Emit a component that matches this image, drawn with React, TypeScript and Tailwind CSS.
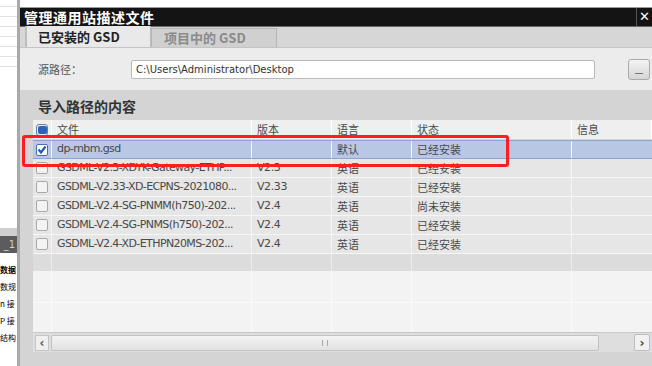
import React from "react";

const cjk = { fontFamily: '"Noto Sans CJK SC", "Noto Sans", sans-serif' };
const latin = { fontFamily: '"DejaVu Sans", "Noto Sans CJK SC", sans-serif' };

interface GsdRow {
  file: string;
  version: string;
  lang: string;
  status: string;
  checked?: boolean;
}

const rows: GsdRow[] = [
  { file: "dp-mbm.gsd", version: "", lang: "默认", status: "已经安装", checked: true },
  { file: "GSDML-V2.3-XDYK-Gateway-ETHP...", version: "V2.3", lang: "英语", status: "已经安装" },
  { file: "GSDML-V2.33-XD-ECPNS-2021080...", version: "V2.33", lang: "英语", status: "已经安装" },
  { file: "GSDML-V2.4-SG-PNMM(h750)-202...", version: "V2.4", lang: "英语", status: "尚未安装" },
  { file: "GSDML-V2.4-SG-PNMS(h750)-202...", version: "V2.4", lang: "英语", status: "已经安装" },
  { file: "GSDML-V2.4-XD-ETHPN20MS-202...", version: "V2.4", lang: "英语", status: "已经安装" },
];

// column widths: checkbox | file | version | language | status | info
const cols = ["w-[19px]", "w-[200px]", "w-[80px]", "w-[80px]", "w-[160px]", "flex-1"];

const Checkbox = ({ state }: { state: "off" | "on" | "header" }) => {
  if (state === "header") {
    return (
      <div className="w-[12px] h-[12px] rounded-[3px] border border-[#6a7fa8] bg-[#e8eef8] flex items-center justify-center">
        <div className="w-[9px] h-[8px] rounded-[2px] bg-[#2f5fb8]" />
      </div>
    );
  }
  if (state === "on") {
    return (
      <div className="w-[12px] h-[12px] rounded-[2px] border border-[#4a6fb0] bg-white flex items-center justify-center">
        <svg width="10" height="10" viewBox="0 0 10 10">
          <path d="M1.5 4.5 L4 7.5 L8.5 1.5" stroke="#1f57c3" strokeWidth="2.2" fill="none" />
        </svg>
      </div>
    );
  }
  return <div className="w-[12px] h-[12px] rounded-[2px] border border-[#a8a8a8] bg-[#f3f3f3]" />;
};

const LeftStrip = () => (
  <div className="w-[20px] shrink-0 flex flex-col bg-white border-r-[3px] border-[#a9a9a9]">
    <div className="h-[70px] flex flex-col gap-[9px] pt-[6px]">
      {[0, 1, 2, 3, 4, 5, 6].map((i) => (
        <div key={i} className="h-px bg-[#e2e2e2]" />
      ))}
    </div>
    <div className="h-[158px]" />
    <div className="h-[8px] bg-[#cfcfcf]" />
    <div className="h-[17px] bg-[#5c5c5c] text-[10px] text-[#d0d0d0] leading-[17px] text-right pr-[2px]" style={latin}>
      _1
    </div>
    <div className="flex flex-col text-[8px] text-black leading-[17px] pt-[8px] overflow-hidden" style={cjk}>
      <span className="font-bold whitespace-nowrap">数据</span>
      <span className="whitespace-nowrap">数规</span>
      <span className="whitespace-nowrap">n 接</span>
      <span className="whitespace-nowrap">P 接</span>
      <span className="whitespace-nowrap">结构</span>
    </div>
  </div>
);

const HeaderCell = ({ w, label }: { w: string; label: string }) => (
  <div className={`${w} h-full border-r border-white pl-[5px] flex items-center text-[11px] text-[#4a4a4a]`} style={cjk}>
    {label}
  </div>
);

export default function App() {
  return (
    <div className="relative w-[652px] h-[366px] flex bg-white overflow-hidden">
      <LeftStrip />

      {/* dialog */}
      <div className="flex-1 min-w-0 flex flex-col mt-[7px] border-t border-[#9a9a9a]">
        {/* title bar */}
        <div className="h-[19px] bg-[#141414] flex items-center justify-between border-b border-[#666]">
          <span className="pl-[4px] text-[14px] font-bold text-white leading-none tracking-[0.5px]" style={cjk}>
            管理通用站描述文件
          </span>
          <div className="flex items-center h-full">
            <div className="w-px h-full bg-[#555]" />
            <span className="px-[2px] text-[13px] font-bold text-white" style={latin}>
              ✕
            </span>
          </div>
        </div>

        {/* tabs */}
        <div className="h-[21px] bg-[#d6d6d6] flex items-end pl-[5px] border-b border-[#c4c4c4]">
          <div className="w-[126px] h-[21px] bg-[#e9e9e9] border-l-2 border-[#9a9a9a] border-r border-[#bdbdbd] flex items-center pl-[11px] text-[13px] font-bold text-[#222]" style={cjk}>
            已安装的 GSD
          </div>
          <div className="w-[126px] h-[19px] bg-[#d0d0d0] border border-b-0 border-[#b5b5b5] flex items-center pl-[12px] text-[13px] text-[#8a8a8a] font-bold" style={cjk}>
            项目中的 GSD
          </div>
        </div>

        {/* path */}
        <div className="h-[42px] bg-[#ececec] flex items-center pl-[18px] pr-[2px]">
          <span className="w-[93px] text-[11px] text-[#555]" style={cjk}>
            源路径：
          </span>
          <div className="w-[464px] h-[19px] bg-white border border-[#b9b9b9] rounded-[2px] flex items-center pl-[4px] text-[10px] text-[#333]" style={latin}>
            C:\Users\Administrator\Desktop
          </div>
          <div className="flex-1" />
          <div className="w-[22px] h-[21px] rounded-[3px] border border-[#a9a9a9] bg-gradient-to-b from-[#f4f4f4] to-[#d6d6d6] flex items-end justify-center pb-[5px]">
            <div className="w-[8px] h-px bg-[#777]" />
          </div>
        </div>

        {/* contents */}
        <div className="flex-1 bg-[#d4d4d4] flex flex-col pl-[13px]">
          <div className="h-[30px] flex items-center pl-[5px] pt-[2px] text-[14px] font-bold text-[#333]" style={cjk}>
            导入路径的内容
          </div>

          <div className="flex flex-col">
            {/* header */}
            <div className="h-[20px] flex bg-[#efefef] border-b border-[#d8d8d8]">
              <div className={`${cols[0]} h-full border-r border-white flex items-center pl-[3px]`}>
                <Checkbox state="header" />
              </div>
              <HeaderCell w={cols[1]} label="文件" />
              <HeaderCell w={cols[2]} label="版本" />
              <HeaderCell w={cols[3]} label="语言" />
              <HeaderCell w={cols[4]} label="状态" />
              <HeaderCell w={cols[5]} label="信息" />
            </div>

            {rows.map((r, i) => (
              <div
                key={i}
                className={`h-[19px] flex ${
                  r.checked ? "bg-[#b9c7e4] border-y border-[#8fa3cf]" : "bg-[#e6e6e6] border-b border-[#f6f6f6]"
                } text-[11px] text-[#484848]`}
              >
                <div className={`${cols[0]} h-full border-r border-[#f6f6f6] flex items-center pl-[3px]`}>
                  <Checkbox state={r.checked ? "on" : "off"} />
                </div>
                <div className={`${cols[1]} h-full border-r border-[#f6f6f6] pl-[5px] flex items-center whitespace-nowrap overflow-hidden tracking-[-0.6px]`} style={latin}>
                  {r.file}
                </div>
                <div className={`${cols[2]} h-full border-r border-[#f6f6f6] pl-[5px] flex items-center tracking-[-0.4px]`} style={latin}>
                  {r.version}
                </div>
                <div className={`${cols[3]} h-full border-r border-[#f6f6f6] pl-[5px] flex items-center`} style={cjk}>
                  {r.lang}
                </div>
                <div className={`${cols[4]} h-full border-r border-[#f6f6f6] pl-[5px] flex items-center`} style={cjk}>
                  {r.status}
                </div>
                <div className={`${cols[5]} h-full`} />
              </div>
            ))}

            {/* empty row */}
            <div className="h-[18px] flex bg-[#dcdcdc] border-b border-[#f4f4f4]">
              <div className={`${cols[0]} h-full border-r border-[#ececec]`} />
              <div className={`${cols[1]} h-full border-r border-[#ececec]`} />
              <div className={`${cols[2]} h-full border-r border-[#ececec]`} />
              <div className={`${cols[3]} h-full border-r border-[#ececec]`} />
              <div className={`${cols[4]} h-full border-r border-[#ececec]`} />
            </div>

            {/* blank area */}
            <div className="h-[60px] flex flex-col bg-[#f3f3f3]">
              <div className="flex-1 flex border-b border-[#fafafa]">
                <div className={`${cols[0]} h-full border-r border-[#fbfbfb]`} />
                <div className={`${cols[1]} h-full border-r border-[#fbfbfb]`} />
                <div className={`${cols[2]} h-full border-r border-[#fbfbfb]`} />
                <div className={`${cols[3]} h-full border-r border-[#fbfbfb]`} />
                <div className={`${cols[4]} h-full border-r border-[#fbfbfb]`} />
              </div>
              <div className="flex-1 flex">
                <div className={`${cols[0]} h-full border-r border-[#fbfbfb]`} />
                <div className={`${cols[1]} h-full border-r border-[#fbfbfb]`} />
                <div className={`${cols[2]} h-full border-r border-[#fbfbfb]`} />
                <div className={`${cols[3]} h-full border-r border-[#fbfbfb]`} />
                <div className={`${cols[4]} h-full border-r border-[#fbfbfb]`} />
              </div>
            </div>

            {/* horizontal scrollbar */}
            <div className="h-[20px] bg-[#dedede] border-t border-[#c8c8c8] flex items-center pl-[2px] gap-[2px]">
              <div className="w-[14px] h-[16px] bg-[#efefef] border border-[#c4c4c4] flex items-center justify-center text-[12px] font-bold text-[#555]" style={latin}>
                ‹
              </div>
              <div className="w-[548px] h-[16px] rounded-[2px] bg-gradient-to-b from-[#f3f3f3] to-[#e2e2e2] border border-[#c2c2c2] flex items-center justify-center">
                <div className="w-[6px] h-[6px] border-x border-[#aaa]" />
              </div>
              <div className="flex-1" />
              <div className="w-[16px] h-[17px] bg-[#f1f1f1] border border-[#bdbdbd] rounded-[2px] flex items-center justify-center text-[12px] font-bold text-[#444] mr-[2px]" style={latin}>
                ›
              </div>
            </div>
          </div>
        </div>
      </div>

      {/* red annotation box */}
      <div className="absolute left-[22px] top-[135px] w-[487px] h-[32px] border-[3px] border-[#ff1e1e] rounded-[3px] pointer-events-none" />
    </div>
  );
}
